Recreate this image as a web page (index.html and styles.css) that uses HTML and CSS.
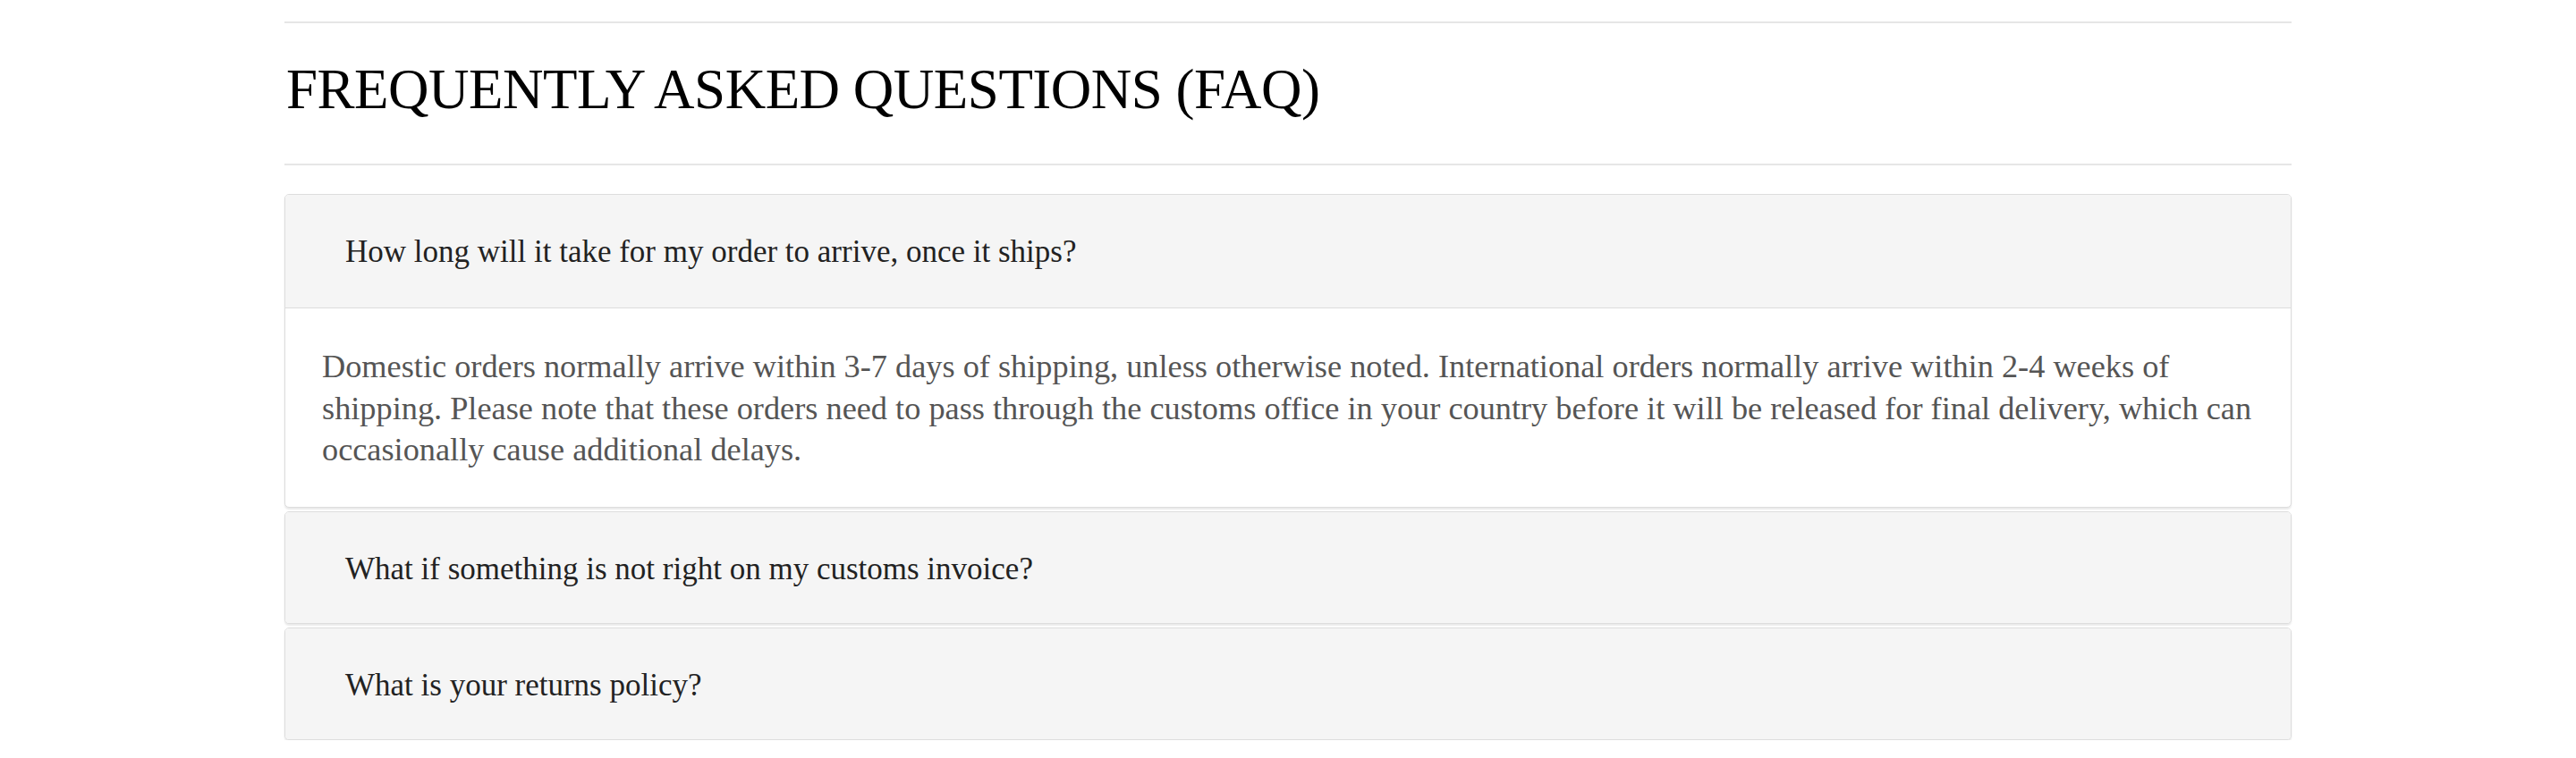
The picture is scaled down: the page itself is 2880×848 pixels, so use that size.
FILE: index.html
```html
<!DOCTYPE html>
<html lang="en">
<head>
<meta charset="utf-8">
<title>FAQ</title>
<link rel="stylesheet" href="styles.css">
</head>
<body>
<div class="container">
  <div class="page-header">
    <h1 class="page-title">FREQUENTLY ASKED QUESTIONS (FAQ)</h1>
  </div>
  <div class="panel-group">
    <div class="panel">
      <div class="panel-heading"><h4 class="panel-title">How long will it take for my order to arrive, once it ships?</h4></div>
      <div class="panel-body">Domestic orders normally arrive within 3-7 days of shipping, unless otherwise noted. International orders normally arrive within 2-4 weeks of shipping. Please note that these orders need to pass through the customs office in your country before it will be released for final delivery, which can occasionally cause additional delays.</div>
    </div>
    <div class="panel">
      <div class="panel-heading panel-heading-closed"><h4 class="panel-title">What if something is not right on my customs invoice?</h4></div>
    </div>
    <div class="panel">
      <div class="panel-heading panel-heading-closed"><h4 class="panel-title">What is your returns policy?</h4></div>
    </div>
  </div>
</div>
</body>
</html>
```

FILE: styles.css
```css
html, body {
  margin: 0;
  padding: 0;
  background: #ffffff;
}

body {
  font-family: "Liberation Serif", "Times New Roman", serif;
  color: #333333;
}

.container {
  width: 2244px;
  margin: 0 auto;
  padding-top: 24px;
}

.page-header {
  border-top: 2px solid #e6e6e6;
  border-bottom: 2px solid #e6e6e6;
  padding: 43px 0 51px;
  margin-bottom: 32px;
}

.page-title {
  margin: 0;
  font-size: 63px;
  line-height: 63px;
  font-weight: 400;
  color: #000000;
  letter-spacing: -0.5px;
  padding-left: 2px;
}

.panel-group {
  display: flex;
  flex-direction: column;
  gap: 4px;
}

.panel {
  border: 1px solid #dddddd;
  border-radius: 5px;
  background: #ffffff;
  box-shadow: 0 2px 2px rgba(0, 0, 0, 0.09);
  overflow: hidden;
}

.panel-heading {
  background: #f5f5f5;
  border-bottom: 1px solid #dddddd;
  padding: 41px 30px 39px 67px;
}

.panel-heading-closed {
  border-bottom: 0;
  padding-bottom: 37px;
}

.panel-title {
  margin: 0;
  font-size: 35px;
  line-height: 46px;
  font-weight: 400;
  color: #222222;
}

.panel-body {
  padding: 42px 40px 40px 41px;
  font-size: 36.3px;
  line-height: 46.5px;
  color: #555555;
}
```
